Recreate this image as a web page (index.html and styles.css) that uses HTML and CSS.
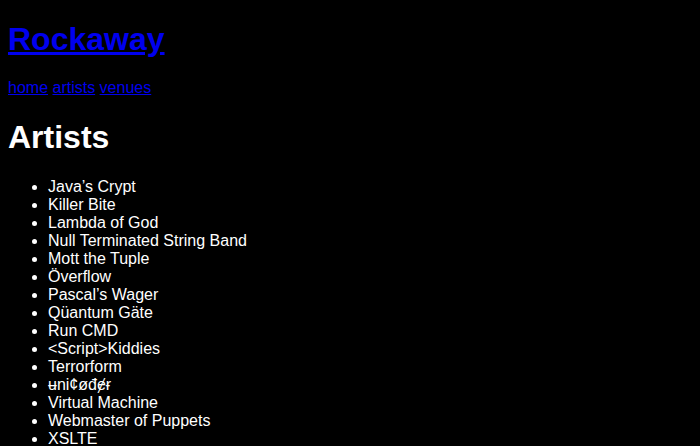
FILE: index.html
```html
<!DOCTYPE html>
<html>
<head>
<meta charset="utf-8">
<title>Rockaway</title>
<link rel="stylesheet" href="styles.css">
</head>
<body>
<header class="site-header">
<h1 class="site-title"><a href="#">Rockaway</a></h1>
<nav class="site-nav"><a href="#">home</a> <a href="#">artists</a> <a href="#">venues</a></nav>
</header>
<main>
<h1 class="page-title">Artists</h1>
<ul class="artist-list">
<li>Java’s Crypt</li>
<li>Killer Bite</li>
<li>Lambda of God</li>
<li>Null Terminated String Band</li>
<li>Mott the Tuple</li>
<li>Överflow</li>
<li>Pascal’s Wager</li>
<li>Qüantum Gäte</li>
<li>Run CMD</li>
<li>&lt;Script&gt;Kiddies</li>
<li>Terrorform</li>
<li>ʉni¢øđɇɍ</li>
<li>Virtual Machine</li>
<li>Webmaster of Puppets</li>
<li>XSLTE</li>
</ul>
</main>
</body>
</html>
```
FILE: styles.css
```css
html { background: #000; }
body {
  margin: 8px;
  background: #000;
  color: #fff;
  font-family: "Liberation Sans", Arial, sans-serif;
  font-size: 16px;
}
a { color: #0000ee; }
.site-title { font-size: 32px; margin: 13px 0 21px; }
.site-nav { margin: 0; }
.page-title { font-size: 32px; margin: 22px 0 22px; }
.artist-list { margin: 16px 0; padding-left: 40px; }
```
